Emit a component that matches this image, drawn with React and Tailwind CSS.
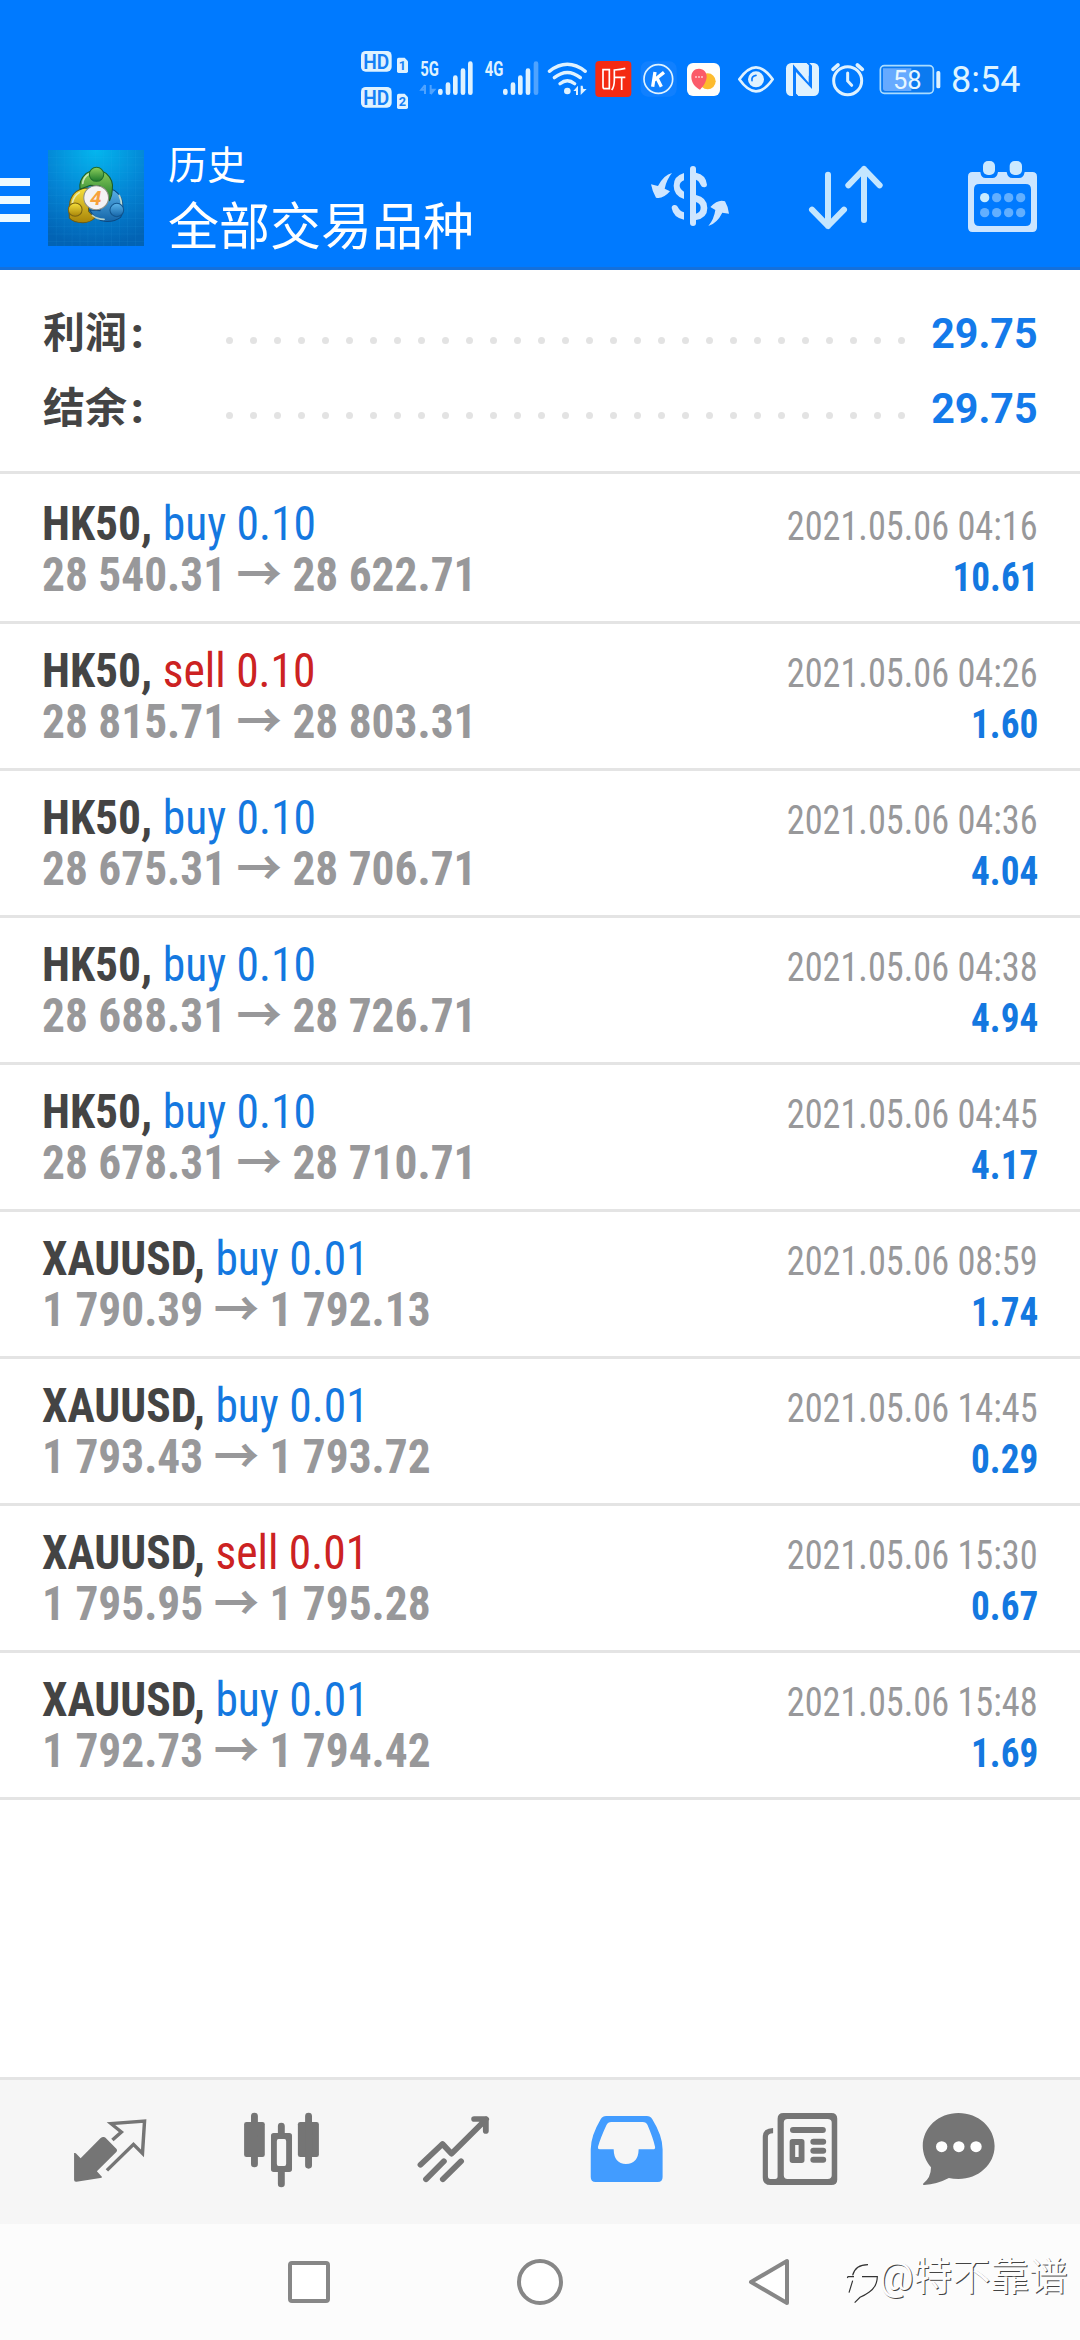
const cjk = "font-['Roboto','Noto_Sans_CJK_SC',sans-serif]";

const deals = [
  ["HK50", "buy", "0.10", "28 540.31", "28 622.71", "2021.05.06 04:16", "10.61"],
  ["HK50", "sell", "0.10", "28 815.71", "28 803.31", "2021.05.06 04:26", "1.60"],
  ["HK50", "buy", "0.10", "28 675.31", "28 706.71", "2021.05.06 04:36", "4.04"],
  ["HK50", "buy", "0.10", "28 688.31", "28 726.71", "2021.05.06 04:38", "4.94"],
  ["HK50", "buy", "0.10", "28 678.31", "28 710.71", "2021.05.06 04:45", "4.17"],
  ["XAUUSD", "buy", "0.01", "1 790.39", "1 792.13", "2021.05.06 08:59", "1.74"],
  ["XAUUSD", "buy", "0.01", "1 793.43", "1 793.72", "2021.05.06 14:45", "0.29"],
  ["XAUUSD", "sell", "0.01", "1 795.95", "1 795.28", "2021.05.06 15:30", "0.67"],
  ["XAUUSD", "buy", "0.01", "1 792.73", "1 794.42", "2021.05.06 15:48", "1.69"],
];

function Icon({ box, className, children }) {
  return (
    <svg viewBox={box} preserveAspectRatio="none" className={`shrink-0 ${className}`}>
      {children}
    </svg>
  );
}

function StatusBar() {
  const light = "#dff2ff";
  return (
    <div className="flex h-[120px] pt-[30px] pl-[358px]">
      <Icon box="54 0 162 270" className="h-[90px] w-[54px]">
        {[0, 108].map((dy, i) => (
          <g key={dy} transform={`translate(0 ${dy})`}>
            <rect x="63" y="63" width="92" height="62" rx="14" fill={light} />
            <text x="109" y="116" textAnchor="middle" fontSize="58" fontWeight="600" textLength="78" lengthAdjust="spacingAndGlyphs" fill="#1580f5" fontFamily="Roboto">HD</text>
            <path d="M176 83h18l10 11v30q0 5-5 5h-23q-5 0-5-5v-36q0-5 5-5z" fill={light} />
            <text x="187" y="121" textAnchor="middle" fontSize="38" fontWeight="700" fill="#1580f5" fontFamily="Roboto">{i + 1}</text>
          </g>
        ))}
      </Icon>
      <Icon box="216 0 198 270" className="h-[90px] w-[66px]">
        <text x="241" y="138" fontSize="58" fontWeight="700" textLength="56" lengthAdjust="spacingAndGlyphs" fill={light} fontFamily="Roboto">5G</text>
        <path d="M255 165v27M255 165l-11 14h11M272 192v-27M272 192l11-13h-11" stroke="#4fa3ff" strokeWidth="6" fill="none" />
        <path d="M301 183v5M324 164v24M346 143v45M369 122v66M391 101v87" stroke={light} strokeWidth="14" strokeLinecap="round" />
      </Icon>
      <Icon box="414 0 198 270" className="h-[90px] w-[66px]">
        <text x="434" y="138" fontSize="58" fontWeight="700" textLength="56" lengthAdjust="spacingAndGlyphs" fill={light} fontFamily="Roboto">4G</text>
        <path d="M588 101v87" stroke="#4fa3ff" strokeWidth="14" strokeLinecap="round" />
        <path d="M496 183v5M519 164v24M541 143v45M564 122v66" stroke={light} strokeWidth="14" strokeLinecap="round" />
      </Icon>
      <Icon box="612 0 144 270" className="h-[90px] w-[48px]">
        <path d="M628 124Q682 82 736 124M643 143Q682 112 721 143M660 161Q682 143 704 161" stroke={light} strokeWidth="10" strokeLinecap="round" fill="none" />
        <circle cx="682" cy="183" r="10" fill={light} />
        <path d="M700 183l14-16v28h-6v-12zM722 167v28l18-18h-10l-2-10z" fill={light} />
      </Icon>
      <Icon box="756 0 132 270" className="h-[90px] w-[44px]">
        <rect x="766" y="93" width="108" height="108" rx="12" fill="#f42a12" />
        <path d="M789 119h19v57h-13q-6 0-6-6zM856 115q-14 4-33 5v30q0 20-8 30M823 142h33M845 142v38" fill="none" stroke="#fff" strokeWidth="5" />
      </Icon>
      <Icon box="888 0 126 270" className="h-[90px] w-[42px]">
        <rect x="902" y="94" width="108" height="106" rx="22" fill="#1080ff" />
        <circle cx="955" cy="147" r="43" fill="none" stroke={light} strokeWidth="5" />
        <path d="M945 126l-7 44M972 127l-29 23M952 146l12 24" fill="none" stroke="#fff" strokeWidth="10" />
      </Icon>
      <Icon box="1014 0 144 270" className="h-[90px] w-[48px]">
        <rect x="1041" y="99" width="99" height="99" rx="18" fill="#fffefa" />
        <circle cx="1103" cy="154" r="24" fill="#fdbb2b" />
        <path d="M1077 116c15 0 24 11 23 25-1 15-10 28-20 38-14-8-26-20-26-39 0-14 9-24 23-24z" fill="#fb5b68" />
        <path d="M1066 141h4M1075 141h4M1084 141h4" stroke="#fff" strokeWidth="5" />
      </Icon>
      <Icon box="108 0 162 270" className="h-[90px] w-[54px]">
        <path d="M148 148Q198 76 248 148Q198 220 148 148z" fill="none" stroke={light} strokeWidth="8" strokeLinejoin="round" />
        <circle cx="198" cy="148" r="24" fill={light} />
        <path d="M186 152q-2-14 12-16" fill="none" stroke="#0a7cff" strokeWidth="5" strokeLinecap="round" />
      </Icon>
      <Icon box="270 0 132 270" className="h-[90px] w-[44px]">
        <rect x="288" y="99" width="99" height="99" rx="16" fill={light} />
        <path d="M309 99v4L356 158V106l-7-7h9l8 8v70L318 126v64l8 8h-17z" fill="#0a7cff" />
        <path d="M320 99l36 40v-33l-8-7zM318 160l34 38h-26l-8-8z" fill={light} />
      </Icon>
      <Icon box="402 0 138 270" className="h-[90px] w-[46px]">
        <circle cx="473" cy="152" r="42" fill="none" stroke={light} strokeWidth="9" />
        <path d="M473 129v24l12 13" fill="none" stroke={light} strokeWidth="9" strokeLinecap="round" />
        <path d="M429 118l15-13M502 105l15 13" stroke={light} strokeWidth="11" strokeLinecap="round" />
      </Icon>
      <Icon box="540 0 222 270" className="h-[90px] w-[74px]">
        <rect x="571" y="107" width="159" height="83" rx="12" fill="#0b7af0" stroke="#a9dcff" strokeWidth="5" />
        <path d="M579 115h85v68h-77q-8 0-8-8z" fill="#66aaff" />
        <text x="652" y="177" textAnchor="middle" fontSize="78" textLength="86" lengthAdjust="spacingAndGlyphs" fill="#e8f7ff" fontFamily="Roboto">58</text>
        <rect x="739" y="123" width="12" height="52" rx="5" fill={light} />
      </Icon>
      <span className="mt-[29px] ml-[7px] text-[36px] leading-[42px] text-[#dff4ff]">8:54</span>
    </div>
  );
}

function AppLogo() {
  return (
    <Icon box="139 60 279 288" className="h-[96px] w-[96px]">
      <defs>
        <radialGradient id="sky" cx="0.5" cy="0" r="1">
          <stop offset="0" stopColor="#04b6ee" />
          <stop offset="0.55" stopColor="#0484d4" />
          <stop offset="1" stopColor="#0263b4" />
        </radialGradient>
        <linearGradient id="green" x1="0" y1="0" x2="0" y2="1">
          <stop offset="0" stopColor="#8fd05c" />
          <stop offset="1" stopColor="#1d7a2c" />
        </linearGradient>
        <linearGradient id="gold" x1="0" y1="0" x2="0" y2="1">
          <stop offset="0" stopColor="#f7e03c" />
          <stop offset="1" stopColor="#a88408" />
        </linearGradient>
        <linearGradient id="blue" x1="0" y1="0" x2="0" y2="1">
          <stop offset="0" stopColor="#5cb4ea" />
          <stop offset="1" stopColor="#1565a8" />
        </linearGradient>
      </defs>
      <rect x="139" y="60" width="279" height="288" fill="url(#sky)" />
      <path d="M163 60v288M186 60v288M209 60v288M232 60v288M255 60v288M278 60v288M301 60v288M324 60v288M347 60v288M370 60v288M393 60v288M139 82h279M139 105h279M139 128h279M139 151h279M139 174h279M139 197h279M139 220h279M139 243h279M139 266h279M139 289h279M139 312h279M139 335h279" stroke="#3fb4f0" strokeOpacity="0.14" strokeWidth="2" />
      <path d="M255 174q-42 2-52 40-4 28-2 50 12 14 40 14 20 0 34-14l-18-20z" fill="url(#gold)" stroke="#6d5a10" strokeWidth="3" />
      <path d="M314 174q36 10 42 46 2 30-6 42-18 14-46 12-28-4-44-34l30 2z" fill="url(#blue)" stroke="#0c4880" strokeWidth="3" />
      <path d="M232 178q-4-28 18-48 30-20 58 0 22 20 18 48 0 18-8 34l-16-20-12-24-28-2z" fill="url(#green)" stroke="#1a5c28" strokeWidth="3" />
      <path d="M240 160q2-20 18-28M210 218q4-20 20-30M346 196q8 16 6 34M268 256q14 12 34 12" stroke="#e9f5d8" strokeOpacity="0.75" strokeWidth="5" fill="none" strokeLinecap="round" />
      <circle cx="280" cy="133" r="21" fill="url(#green)" stroke="#1e6b2d" strokeWidth="3" />
      <circle cx="218" cy="239" r="20" fill="url(#gold)" stroke="#7c6412" strokeWidth="3" />
      <circle cx="339" cy="240" r="20" fill="url(#blue)" stroke="#12568f" strokeWidth="3" />
      <circle cx="279" cy="203" r="36" fill="#f4f2f4" stroke="#8d8f86" strokeWidth="3" />
      <text x="278" y="224" textAnchor="middle" fontSize="60" fontWeight="700" fontStyle="italic" fill="#f7a13c" fontFamily="Roboto">4</text>
    </Icon>
  );
}

function Toolbar() {
  return (
    <div className="flex h-[150px] items-start border-b-[3px] border-[#1470dc]">
      <div className="mt-[58px] flex w-[30px] flex-col gap-[10px]">
        <div className="h-[8px] bg-[#eefaff]" />
        <div className="h-[8px] bg-[#eefaff]" />
        <div className="h-[8px] bg-[#eefaff]" />
      </div>
      <div className="mt-[30px] ml-[18px]">
        <AppLogo />
      </div>
      <div className="mt-[20px] ml-[24px] w-[482px] text-white">
        <div className="text-[39px] leading-[52px]">历史</div>
        <div className="mt-[4px] text-[51px] leading-[64px]">全部交易品种</div>
      </div>
      <Icon box="150 90 240 219" className="mt-[40px] h-[73px] w-[80px]">
        <g fill="#cfe6ff">
          <path d="M216 129q-24 5-42 39l-21-5q4 22 15 40 21 5 42-19l-16-8q6-28 22-47zM325 288q26-8 42-40l20 3q-2-20-12-37-20-8-44 17l15 9q-4 28-21 48z" />
          <path d="M252 129v22q-13 6-13 16 0 9 13 18v22q-31-10-31-40 0-29 31-38zM215 234q0-8 8-9 7-1 10 5 5 12 19 17v22q-32-6-37-35z" />
          <path d="M288 128q30 6 33 36 0 7-7 8-9 1-12-7-5-13-14-16v46q34 7 34 39 0 30-34 36v-19q14-5 14-18 0-12-14-17v-88z" />
          <rect x="270" y="108" width="18" height="180" rx="9" />
        </g>
      </Icon>
      <Icon box="624 90 228 219" className="mt-[40px] ml-[78px] h-[73px] w-[76px]">
        <path d="M684 134v154M636 239l48 49 48-49M792 270V117M745 166l47-49 47 49" fill="none" stroke="#c4e6ff" strokeWidth="18" strokeLinecap="round" strokeLinejoin="round" />
      </Icon>
      <Icon box="1101 90 213 219" className="mt-[40px] ml-[83px] h-[73px] w-[71px]">
        <path fillRule="evenodd" d="M1117 126h24q2 18 16 18h20q14 0 17-18h26q3 18 17 18h20q14 0 17-18h23q14 0 14 14v152q0 14-14 14h-180q-13 0-13-14V140q0-14 13-14zM1138 162q-16 0-16 16v94q0 16 16 16h139q16 0 16-16v-94q0-16-16-16z" fill="#cce5ff" />
        <rect x="1149" y="93" width="36" height="42" rx="15" fill="#cbe9ff" />
        <rect x="1229" y="93" width="37" height="42" rx="15" fill="#cbe9ff" />
        <circle cx="1154" cy="203" r="14" fill="#c8ecff" />
        {[[1190, 203], [1226, 203], [1262, 203], [1154, 248], [1190, 248], [1226, 248], [1262, 248]].map(([x, y]) => (
          <circle key={`${x}-${y}`} cx={x} cy={y} r="14" fill="#62afff" />
        ))}
      </Icon>
    </div>
  );
}

function SummaryLine({ label, value }) {
  return (
    <div className="flex h-[75px] items-center">
      <div className="w-[184px] pl-px text-[42px] leading-[60px] font-bold text-[#444]">
        {label}<span className="ml-[4px] font-black">:</span>
      </div>
      <div className="mt-[13px] flex w-[679px] justify-between">
        {Array.from({ length: 29 }, (_, i) => (
          <span key={i} className="h-[7px] w-[7px] rounded-full bg-[#e3e3e3]" />
        ))}
      </div>
      <div className="ml-auto origin-right scale-x-[0.98] text-[42px] leading-[60px] font-bold text-[#147aea]">{value}</div>
    </div>
  );
}

function DealRow({ deal }) {
  const [symbol, side, volume, open, close, time, profit] = deal;
  return (
    <div className="h-[147px] border-b-[3px] border-[#e4e4e4] pt-[21px] pr-[42px] pl-[42px] [font-stretch:75%]">
      <div className="flex h-[51px] items-baseline justify-between leading-[51px] whitespace-pre">
        <span className="origin-left scale-x-[0.948] text-[48px]">
          <b className="font-bold text-[#444]">{symbol}, </b>
          <span className={side === "buy" ? "text-[#1478e0]" : "text-[#cc2222]"}>{side} {volume}</span>
        </span>
        <span className="origin-right scale-x-[0.907] text-[40px] text-[#98989a]">{time}</span>
      </div>
      <div className="flex h-[51px] items-baseline justify-between leading-[51px] font-bold whitespace-pre">
        <span className="origin-left scale-x-[0.945] text-[48px] text-[#98989a]">{open} → {close}</span>
        <span className="origin-right scale-x-[0.93] text-[40px] text-[#1478e0]">{profit}</span>
      </div>
    </div>
  );
}

function TabBar() {
  const g = "#757575";
  return (
    <div className="flex h-[147px] border-t-[3px] border-[#e4e4e4] bg-[#f6f6f6] pt-[30px] pl-[72px]">
      <Icon box="209 120 220 237" className="h-[79px] w-[76px]">
        <path d="M299 201q4-1 7 2l32 34q3 4 0 8l-57 59 15 17q-1 3-5 3l-69 11q-7 1-7-6v-80q3-1 5 1l14 15 58-61q4-3 7-3z" fill={g} />
        <path d="M326 210l26-24-30-25 97-8-6 97-26-27-77 78" fill="none" stroke={g} strokeWidth="10" />
      </Icon>
      <Icon box="700 120 235 237" className="ml-[93px] h-[79px] w-[81px]">
        <g fill={g}>
          <rect x="709" y="156" width="60" height="105" rx="7" />
          <rect x="865" y="156" width="61" height="105" rx="7" />
          <path fillRule="evenodd" d="M795 189h45q8 0 8 8v101q0 8-8 8h-45q-8 0-8-8V197q0-8 8-8zm14 18q-5 0-5 7v67q0 7 5 7h17q5 0 5-7v-67q0-7-5-7z" />
        </g>
        <path d="M739 138v144M896 138v148M817 168v24M817 304v38" stroke={g} strokeWidth="20" strokeLinecap="round" />
      </Icon>
      <Icon box="1205 120 224 237" className="ml-[93px] h-[79px] w-[77px]">
        <path d="M1221 284l64-62 26 29 101-103M1377 147h34v36M1237 328l52-54M1286 328l53-54" fill="none" stroke={g} strokeWidth="17" strokeLinecap="round" strokeLinejoin="round" />
      </Icon>
      <Icon box="139 120 225 237" className="ml-[96px] h-[79px] w-[77px]">
        <path fillRule="evenodd" d="M192 138h119q10 0 16 10 30 50 30 90v83q0 15-14 15H161q-14 0-14-15v-83q0-40 29-90 6-10 16-10zm15 18q-10 0-14 9-18 40-25 66-1 7 5 7h41q1 44 36 44 36 0 37-44h42q7 0 6-7-5-25-22-66-4-9-14-9z" fill="#429cff" />
      </Icon>
      <Icon box="639 120 232 237" className="ml-[95px] h-[79px] w-[80px]">
        <path fillRule="evenodd" d="M707 129h139q17 0 17 17v183q0 16-17 16H670q-23 0-23-22V200q0-25 30-26v16q-15 1-15 10v118q0 9 7 9h14q7 0 7-8V146q0-17 17-17zm12 18q-11 0-11 11v158q0 11 11 11h116q12 0 12-11V158q0-11-12-11z" fill={g} />
        <path d="M735 180h86M794 215h28M794 242h28M794 269h28" stroke={g} strokeWidth="18" strokeLinecap="round" />
        <path fillRule="evenodd" d="M733 207h27q8 0 8 8v56q0 8-8 8h-27q-8 0-8-8v-56q0-8 8-8zm8 18v36h10v-36z" fill={g} />
      </Icon>
      <Icon box="1101 120 224 237" className="ml-[80px] h-[79px] w-[77px]">
        <path d="M1213 129c58 0 105 44 105 99s-47 99-105 99q-16 0-28-3-35 19-72 21-5 0-3-4 23-17 23-49c-15-18-24-42-24-64 0-55 46-99 104-99z" fill={g} />
        <circle cx="1164" cy="230" r="16.500" fill="#fff" />
        <circle cx="1214" cy="230" r="16.500" fill="#fff" />
        <circle cx="1264" cy="230" r="16.500" fill="#fff" />
      </Icon>
    </div>
  );
}

function SystemNav() {
  return (
    <div className="flex h-[116px] items-start bg-[#fcfcfc]">
      <div className="mt-[37px] ml-[288px] h-[42px] w-[42px] rounded-[4px] border-4 border-[#878787] bg-white" />
      <div className="mt-[35px] ml-[187px] h-[46px] w-[46px] rounded-full border-4 border-[#878787] bg-white" />
      <svg viewBox="0 0 42 48" className="mt-[34px] ml-[185px] h-[48px] w-[42px]">
        <path d="M39 3v42L3 24z" fill="#fff" stroke="#878787" strokeWidth="4" strokeLinejoin="round" />
      </svg>
      <svg viewBox="15 30 105 141" className="mt-[36px] ml-[55px] h-[47px] w-[35px]">
        <path d="M38 76Q46 44 84 44M22 84l2-4h18M66 80h46q-1 30-24 46-14 10-28 16l-16 16M38 92l-11 36" fill="none" stroke="#333" strokeWidth="3.500" />
      </svg>
      <span className="mt-[27px] -ml-[1px] text-[38.500px] leading-[52px] whitespace-nowrap text-[#fdfdfd] [text-shadow:1px_1px_0_#444]">@特不靠谱</span>
    </div>
  );
}

export default function App() {
  return (
    <div className={`flex h-[2340px] w-[1080px] flex-col overflow-hidden bg-white ${cjk}`}>
      <header className="h-[270px] bg-[#007aff]">
        <StatusBar />
        <Toolbar />
      </header>
      <section className="h-[204px] border-b-[3px] border-[#e4e4e4] pt-[26px] pr-[42px] pl-[42px]">
        <SummaryLine label="利润" value="29.75" />
        <SummaryLine label="结余" value="29.75" />
      </section>
      <main className="grow pt-[3px]">
        {deals.map((deal) => (
          <DealRow key={deal[5]} deal={deal} />
        ))}
      </main>
      <TabBar />
      <SystemNav />
    </div>
  );
}
